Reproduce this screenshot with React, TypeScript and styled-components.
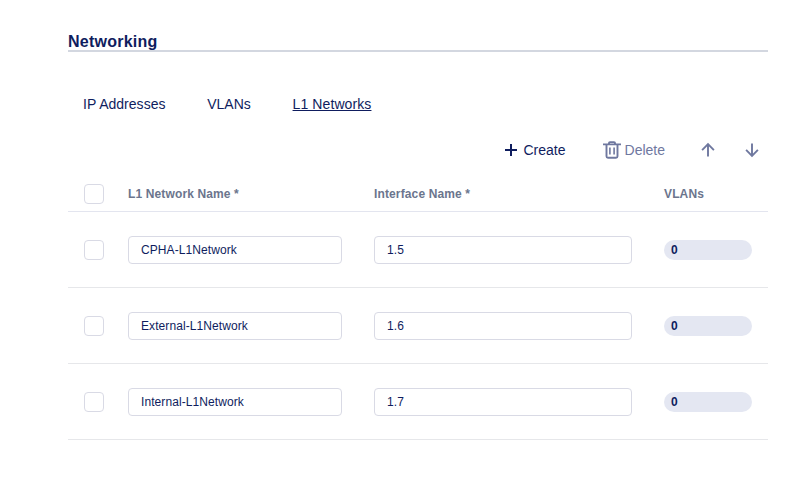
import React from 'react';
import styled, { createGlobalStyle } from 'styled-components';

const GlobalStyle = createGlobalStyle`
  *, *::before, *::after { box-sizing: border-box; }
  body {
    margin: 0;
    background: #fff;
    color: #0f1d5e;
    font-family: "Liberation Sans", Helvetica, Arial, sans-serif;
  }
`;

const Page = styled.main`
  width: 700px;
  margin-left: 68px;
  padding-top: 32px;
`;

const Title = styled.h1`
  height: 20px;
  margin: 0;
  border-bottom: 2px solid #d3d7e0;
  font-size: 16px;
  line-height: 19px;
  font-weight: 700;
  letter-spacing: 0.24px;
`;

const Tabs = styled.nav`
  display: flex;
  gap: 41.7px;
  margin-top: 42px;
  padding-left: 15px;
`;

const Tab = styled.a<{ $active?: boolean }>`
  font-size: 14px;
  line-height: 20px;
  letter-spacing: ${p => (p.$active ? 0.1 : 0.02)}px;
  text-decoration: ${p => (p.$active ? 'underline' : 'none')};
  text-underline-offset: 1px;
  text-decoration-thickness: 1px;
  cursor: pointer;
`;

const Toolbar = styled.div`
  display: flex;
  justify-content: flex-end;
  align-items: center;
  height: 32px;
  margin-top: 20px;
  padding-right: 8px;
`;

const Action = styled.button<{ $muted?: boolean; $gap?: number; $after?: number }>`
  display: flex;
  align-items: center;
  gap: ${p => p.$gap ?? 0}px;
  margin: 0 ${p => p.$after ?? 0}px 0 0;
  padding: 0;
  border: 0;
  background: none;
  color: ${p => (p.$muted ? '#6f789f' : '#0f1d5e')};
  font: 14px/20px "Liberation Sans", Helvetica, Arial, sans-serif;
`;

const Row = styled.div<{ $head?: boolean }>`
  display: grid;
  grid-template-columns: 44px 246px 290px 88px;
  align-items: center;
  height: ${p => (p.$head ? 46 : 76)}px;
  padding: ${p => (p.$head ? '10px 16px 0' : '0 16px')};
  border-bottom: 1px solid ${p => (p.$head ? '#e3e5ef' : '#e6e7ea')};
`;

const HeadCell = styled.span`
  color: #6b758d;
  font-size: 12px;
  line-height: 16px;
  font-weight: 700;
  letter-spacing: 0.13px;
`;

const Checkbox = styled.input.attrs({ type: 'checkbox' })`
  appearance: none;
  width: 20px;
  height: 20px;
  margin: 0;
  border: 1px solid #d9dae5;
  border-radius: 4px;
  background: #fff;
`;

const Field = styled.input.attrs({ type: 'text' })`
  width: calc(100% - 32px);
  height: 28px;
  padding: 0 12px;
  border: 1px solid #d9dae5;
  border-radius: 4px;
  background: #fff;
  color: #0f1d5e;
  font: 12px "Liberation Sans", Helvetica, Arial, sans-serif;
  letter-spacing: 0.08px;
  outline: none;
`;

const Badge = styled.span`
  height: 20px;
  padding-left: 7px;
  border-radius: 10px;
  background: #e4e7f2;
  font-size: 12px;
  line-height: 20px;
  font-weight: 700;
`;

const PlusIcon = () => (
  <svg width="12" height="12" viewBox="0 0 12 12" fill="none" stroke="currentColor" strokeWidth="2">
    <path d="M6 0v12M0 6h12" />
  </svg>
);

const TrashIcon = () => (
  <svg width="18" height="18" viewBox="0 0 18 18" fill="none" stroke="currentColor" strokeWidth="1.9">
    <path d="M0 3.4h18M3.5 3.5v11.7a1.5 1.5 0 0 0 1.5 1.5h8a1.5 1.5 0 0 0 1.5-1.5V3.5M6 3V2.1a1 1 0 0 1 1-1h4a1 1 0 0 1 1 1V3" />
    <path d="M6.9 6.5v7M11.1 6.5v7" strokeWidth="1.6" />
  </svg>
);

const ArrowIcon = ({ down = false }: { down?: boolean }) => (
  <svg width="16" height="16" viewBox="0 0 16 16" fill="none" stroke="currentColor" strokeWidth="1.9">
    <path d={down ? 'M8 1.5v12.3M2.1 7.9l5.9 5.9 5.9-5.9' : 'M8 14.5V2.2M2.1 8.1l5.9-5.9 5.9 5.9'} />
  </svg>
);

const networks = [
  { name: 'CPHA-L1Network', iface: '1.5', vlans: 0 },
  { name: 'External-L1Network', iface: '1.6', vlans: 0 },
  { name: 'Internal-L1Network', iface: '1.7', vlans: 0 },
];

export default function App() {
  return (
    <>
      <GlobalStyle />
      <Page>
        <Title>Networking</Title>
        <Tabs>
          <Tab>IP Addresses</Tab>
          <Tab>VLANs</Tab>
          <Tab $active>L1 Networks</Tab>
        </Tabs>
        <Toolbar>
          <Action $gap={7} $after={37}><PlusIcon />Create</Action>
          <Action $muted $gap={4} $after={35}><TrashIcon />Delete</Action>
          <Action $muted $after={28} aria-label="Move up"><ArrowIcon /></Action>
          <Action $muted aria-label="Move down"><ArrowIcon down /></Action>
        </Toolbar>
        <Row $head>
          <Checkbox aria-label="Select all" />
          <HeadCell>L1 Network Name *</HeadCell>
          <HeadCell>Interface Name *</HeadCell>
          <HeadCell>VLANs</HeadCell>
        </Row>
        {networks.map(n => (
          <Row key={n.name}>
            <Checkbox aria-label={`Select ${n.name}`} />
            <Field defaultValue={n.name} />
            <Field defaultValue={n.iface} />
            <Badge>{n.vlans}</Badge>
          </Row>
        ))}
      </Page>
    </>
  );
}
